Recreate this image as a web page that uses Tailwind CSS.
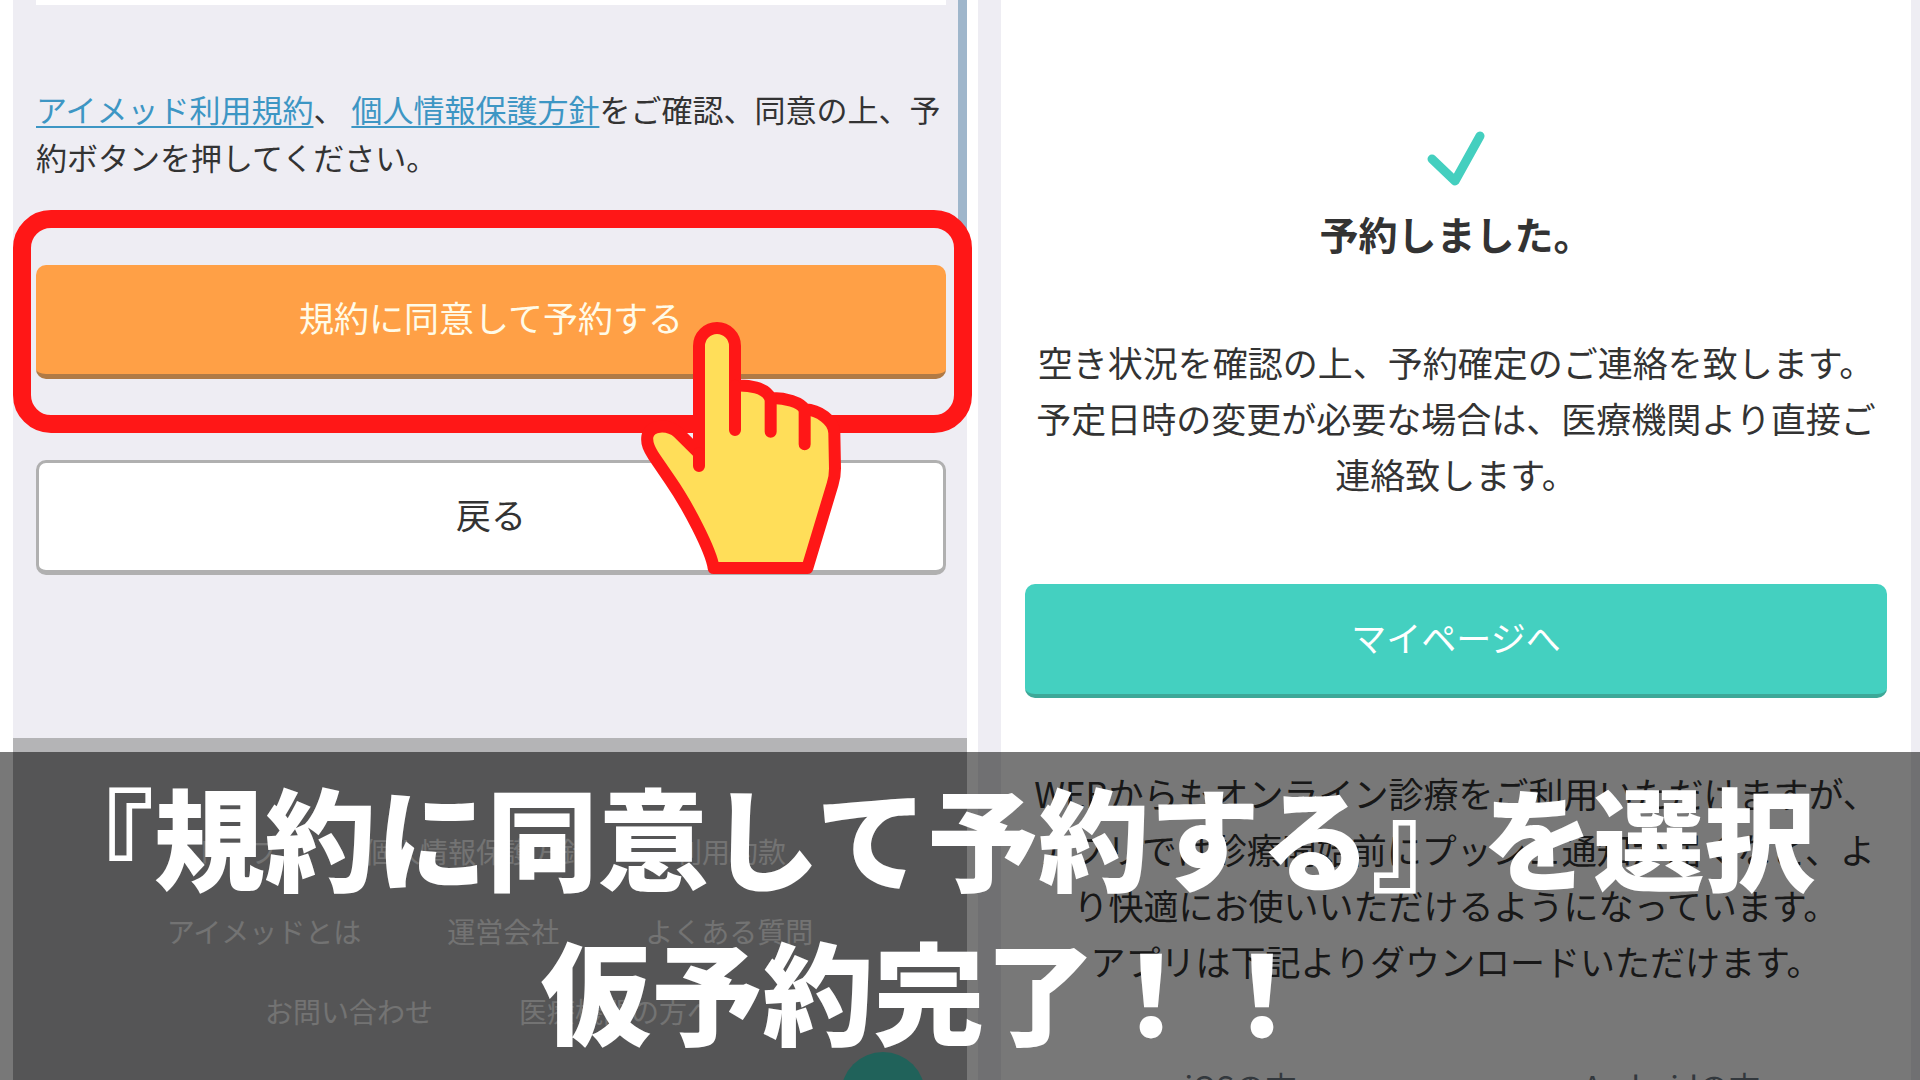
<!DOCTYPE html>
<html lang="ja">
<head>
  <meta charset="UTF-8">
  <meta name="viewport" content="width=device-width, initial-scale=1.0">
  <title>予約の確定</title>
  <script src="https://cdn.jsdelivr.net/npm/@tailwindcss/browser@4"></script>
</head>
<body class="relative h-screen overflow-hidden bg-white font-['Noto_Sans_CJK_JP',sans-serif] text-[#333333]">
  <div class="grid grid-cols-[954fr_942fr] gap-[11px] pl-[13px] h-full">

    <!-- 予約確認画面 -->
    <section class="relative flex flex-col bg-[#eeedf3]">
      <div class="absolute top-0 right-0 w-[9px] h-[230px] bg-[#9fb6cb]"></div>
      <div class="pl-[23px] pr-[21px]">
        <div class="h-[5px] bg-white"></div>
        <p class="mt-[80px] text-[31px] leading-[48px]">
          <a href="#" class="text-[#3d96c4] underline underline-offset-4 decoration-2">アイメッド利用規約</a>、
          <a href="#" class="text-[#3d96c4] underline underline-offset-4 decoration-2">個人情報保護方針</a>をご確認、同意の上、予約ボタンを押してください。
        </p>
        <div class="relative mt-[84px]">
          <button type="button" class="block w-full h-[114px] pb-1 rounded-[10px] border-b-5 border-[#b07a45] bg-[#ffa046] text-[35px] text-[#fffbe8]">規約に同意して予約する</button>
          <div class="absolute -top-[55px] -bottom-[54px] -left-[23px] -right-[26px] border-18 border-[#ff1717] rounded-[38px] pointer-events-none"></div>
        </div>
        <button type="button" class="block w-full mt-[81px] h-[115px] pb-1 rounded-[10px] border-3 border-b-5 border-[#b0b0b0] bg-white text-[35px]">戻る</button>
      </div>

      <footer class="relative flex-1 mt-[163px] pt-[92px] bg-[#b4b4b6] text-[28px] leading-[42px] text-[#f4f4f4]">
        <nav class="flex flex-col items-center gap-[38px]">
          <div class="flex gap-[86px]">
            <a href="#">トップ</a>
            <a href="#">個人情報保護方針</a>
            <a href="#">利用約款</a>
          </div>
          <div class="flex gap-[86px]">
            <a href="#">アイメッドとは</a>
            <a href="#">運営会社</a>
            <a href="#">よくある質問</a>
          </div>
          <div class="flex gap-[86px]">
            <a href="#">お問い合わせ</a>
            <a href="#">医療機関の方へ</a>
          </div>
        </nav>
        <!-- ページ上部へ戻る -->
        <a href="#" aria-label="ページ上部へ" class="absolute top-[314px] right-[42px] flex items-center justify-center size-[84px] rounded-full bg-[#44d0c0]">
          <svg class="w-[36px] h-[28px]" viewBox="0 0 36 28" fill="none" stroke="#fff" stroke-width="4" stroke-linecap="round"><path d="M4 22L18 3l14 19"/></svg>
        </a>
      </footer>

      <!-- 指アイコン -->
      <svg class="absolute top-[320px] right-[123px] w-[204px] h-[257px]" viewBox="120 90 612 771" fill="none" stroke="#ff1717" stroke-width="36" stroke-linecap="round" stroke-linejoin="round">
        <path fill="#ffde59" d="M297 490V168a54 54 0 0 1 108 0V287C445 285 497 292 511 324C555 322 603 338 614 358C655 360 703 390 703 430L705 535Q705 560 698 582L622 834H341C333 780 262 645 210 570L160 497C148 478 139 462 142 440C148 402 205 402 235 428Z"/>
        <path d="M297 490V528M405 287V420M512 324V425M614 358V463"/>
      </svg>
    </section>

    <!-- 予約完了画面 -->
    <section class="pl-[23px] pr-[9px] bg-[#eeedf3]">
      <div class="h-full px-6 pt-[131px] bg-white text-center">
        <svg class="mx-auto w-[58px] h-[55px]" viewBox="0 0 58 55" fill="none" stroke="#44cfbf" stroke-width="9" stroke-linecap="round" stroke-linejoin="round"><path d="M5 28L28 50L53 5"/></svg>
        <h1 class="mt-[19px] text-[39px] leading-[56px] font-bold">予約しました。</h1>
        <p class="mt-[73px] text-[35px] leading-[56px]">空き状況を確認の上、予約確定のご連絡を致します。<br>予定日時の変更が必要な場合は、医療機関より直接ご連絡致します。</p>
        <button type="button" class="block w-full mt-[82px] h-[114px] pb-1 rounded-[10px] border-b-4 border-[#3da898] bg-[#44d0c0] text-[35px] text-white">マイページへ</button>
        <p class="mt-[67px] text-[35px] leading-[56px]">WEBからもオンライン診療をご利用いただけますが、アプリでは診療開始前にプッシュ通知が届くなど、より快適にお使いいただけるようになっています。<br>アプリは下記よりダウンロードいただけます。</p>
        <div class="grid grid-cols-2 mt-[73px] text-[31px] leading-[48px] text-[#6d7783]">
          <span>iOSの方</span>
          <span>Androidの方</span>
        </div>
      </div>
    </section>
  </div>

  <!-- 字幕 -->
  <div class="absolute inset-x-0 top-[752px] bottom-0 pt-[6px] pr-[62px] bg-black/53 text-center text-white font-black text-[111px] leading-[154px] whitespace-nowrap">
    <p>『規約に同意して予約する』を選択</p>
    <p>仮予約完了！！</p>
  </div>
</body>
</html>
